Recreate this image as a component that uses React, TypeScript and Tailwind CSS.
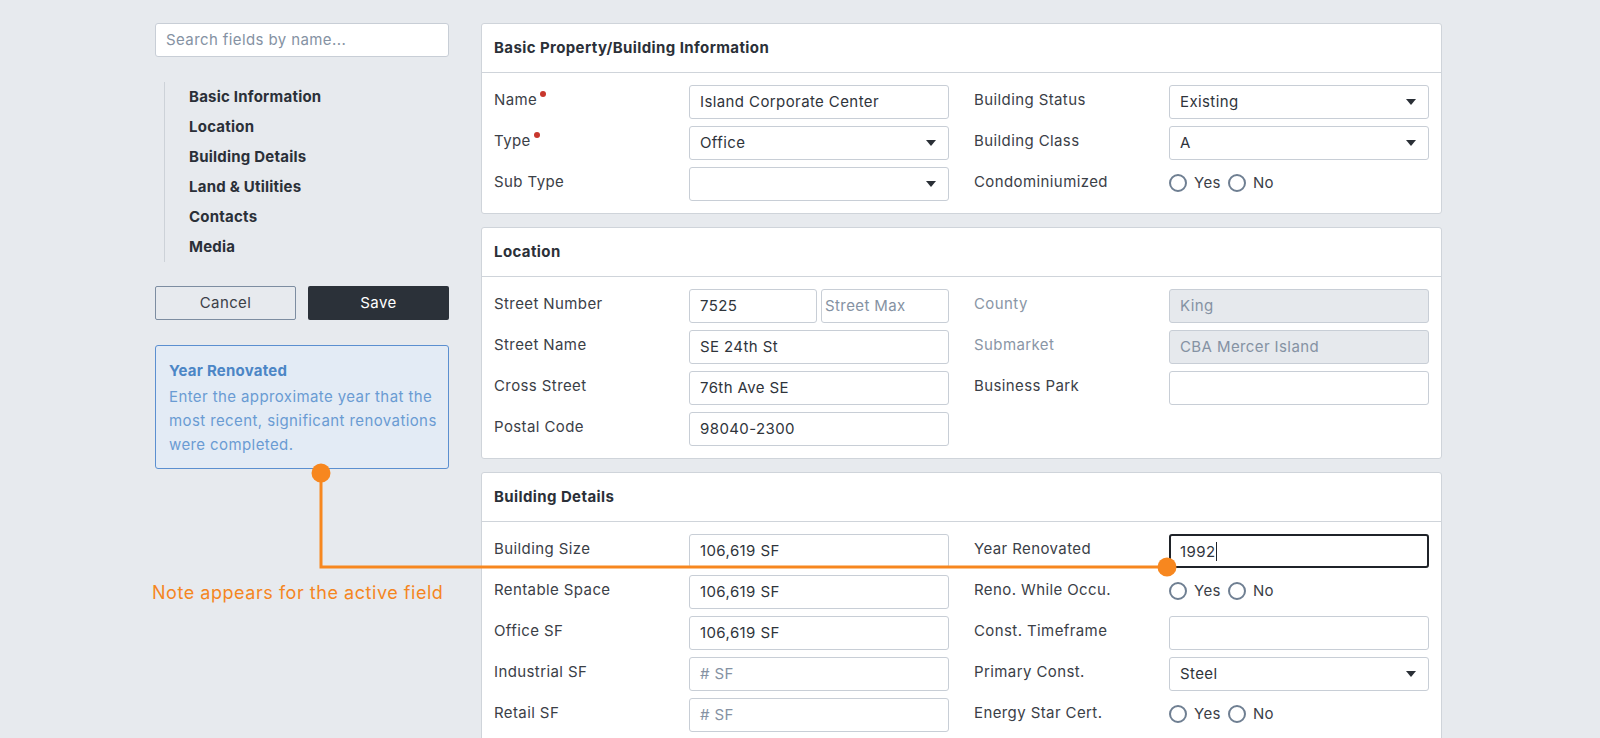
import { ReactNode } from 'react';

type Field =
  | { kind: 'input'; label: string; value?: string; placeholder?: string; required?: boolean }
  | { kind: 'select'; label: string; value?: string; required?: boolean }
  | { kind: 'radio'; label: string }
  | { kind: 'split'; label: string; value: string; placeholder: string }
  | { kind: 'disabled'; label: string; value: string }
  | { kind: 'active'; label: string; value: string }
  | { kind: 'empty' };

type Section = { title: string; rows: [Field, Field][] };

const sections: Section[] = [
  {
    title: 'Basic Property/Building Information',
    rows: [
      [{ kind: 'input', label: 'Name', value: 'Island Corporate Center', required: true }, { kind: 'select', label: 'Building Status', value: 'Existing' }],
      [{ kind: 'select', label: 'Type', value: 'Office', required: true }, { kind: 'select', label: 'Building Class', value: 'A' }],
      [{ kind: 'select', label: 'Sub Type' }, { kind: 'radio', label: 'Condominiumized' }],
    ],
  },
  {
    title: 'Location',
    rows: [
      [{ kind: 'split', label: 'Street Number', value: '7525', placeholder: 'Street Max' }, { kind: 'disabled', label: 'County', value: 'King' }],
      [{ kind: 'input', label: 'Street Name', value: 'SE 24th St' }, { kind: 'disabled', label: 'Submarket', value: 'CBA Mercer Island' }],
      [{ kind: 'input', label: 'Cross Street', value: '76th Ave SE' }, { kind: 'input', label: 'Business Park' }],
      [{ kind: 'input', label: 'Postal Code', value: '98040-2300' }, { kind: 'empty' }],
    ],
  },
  {
    title: 'Building Details',
    rows: [
      [{ kind: 'input', label: 'Building Size', value: '106,619 SF' }, { kind: 'active', label: 'Year Renovated', value: '1992' }],
      [{ kind: 'input', label: 'Rentable Space', value: '106,619 SF' }, { kind: 'radio', label: 'Reno. While Occu.' }],
      [{ kind: 'input', label: 'Office SF', value: '106,619 SF' }, { kind: 'input', label: 'Const. Timeframe' }],
      [{ kind: 'input', label: 'Industrial SF', placeholder: '# SF' }, { kind: 'select', label: 'Primary Const.', value: 'Steel' }],
      [{ kind: 'input', label: 'Retail SF', placeholder: '# SF' }, { kind: 'radio', label: 'Energy Star Cert.' }],
    ],
  },
];

const nav = ['Basic Information', 'Location', 'Building Details', 'Land & Utilities', 'Contacts', 'Media'];

function Box({ children, className = '' }: { children?: ReactNode; className?: string }) {
  return (
    <div className={`h-[34px] flex items-center px-[10px] rounded-[3px] border border-[#c8ced6] bg-white text-[15px] text-[#2f343b] ${className}`}>
      {children}
    </div>
  );
}

function Caret() {
  return (
    <svg width="10" height="6" viewBox="0 0 10 6" className="ml-auto mr-[2px] shrink-0">
      <path d="M0 0h10L5 6z" fill="#2a2f36" />
    </svg>
  );
}

function Radio({ text }: { text: string }) {
  return (
    <span className="flex items-center gap-[7px]">
      <span className="w-[18px] h-[18px] rounded-full border-2 border-[#6f7f92] bg-white" />
      <span className="text-[15px] text-[#3b4047]">{text}</span>
    </span>
  );
}

function Control({ f }: { f: Field }) {
  switch (f.kind) {
    case 'input':
      return <Box>{f.value ?? <span className="text-[#8592a3]">{f.placeholder}</span>}</Box>;
    case 'select':
      return (
        <Box>
          <span>{f.value}</span>
          <Caret />
        </Box>
      );
    case 'split':
      return (
        <div className="flex gap-[4px]">
          <Box className="w-[128px]">{f.value}</Box>
          <Box className="w-[128px] !pl-[3px] !text-[#8592a3]">{f.placeholder}</Box>
        </div>
      );
    case 'disabled':
      return <Box className="!bg-[#e6e9ed] !text-[#8592a3]">{f.value}</Box>;
    case 'active':
      return (
        <Box className="!border-2 !border-[#1f2329] !px-[9px]">
          <span className="border-r border-[#1f2329] pr-[1px] leading-[19px]">{f.value}</span>
        </Box>
      );
    case 'radio':
      return (
        <div className="h-[34px] flex items-start pt-[5px] gap-[7px]">
          <Radio text="Yes" />
          <Radio text="No" />
        </div>
      );
    default:
      return null;
  }
}

function FieldCell({ f }: { f: Field }) {
  if (f.kind === 'empty') return <div className="w-[455px]" />;
  const muted = f.kind === 'disabled';
  const required = 'required' in f && f.required;
  return (
    <div className="w-[455px] flex items-start">
      <div className={`w-[195px] pt-[5px] leading-[20px] text-[15px] ${muted ? 'text-[#8a96a6]' : 'text-[#3b4047]'}`}>
        <span className="relative">
          {f.label}
          {required && <span className="absolute -right-[9px] top-[1px] w-[6px] h-[6px] rounded-full bg-[#c8372d]" />}
        </span>
      </div>
      <div className="w-[260px]">
        <Control f={f} />
      </div>
    </div>
  );
}

function Card({ s }: { s: Section }) {
  return (
    <div className="bg-white border border-[#cfd4da] rounded-[3px]">
      <div className="h-[49px] flex items-center px-[12px] border-b border-[#cfd4da] text-[15px] font-bold text-[#2b3038]">
        {s.title}
      </div>
      <div className="pt-[12px] pb-[12px] px-[12px] flex flex-col gap-[7px]">
        {s.rows.map((r, i) => (
          <div key={i} className="flex gap-[25px]">
            <FieldCell f={r[0]} />
            <FieldCell f={r[1]} />
          </div>
        ))}
      </div>
    </div>
  );
}

export default function App() {
  return (
    <div className="relative h-[738px] overflow-hidden bg-[#e7eaee] font-['Inter',sans-serif] tracking-[0.025em]">
      <div className="flex gap-[32px] pl-[155px] pt-[23px]">
        {/* sidebar */}
        <div className="w-[294px] shrink-0">
          <div className="h-[34px] flex items-center px-[10px] bg-white border border-[#c8ced6] rounded-[3px] text-[15px] text-[#8592a3]">
            Search fields by name...
          </div>
          <div className="mt-[25px] ml-[9px] border-l border-[#cdd2d8] pl-[24px]">
            {nav.map((n) => (
              <div key={n} className="h-[30px] flex items-center text-[15px] font-bold text-[#2b3038] tracking-[0.015em]">
                {n}
              </div>
            ))}
          </div>
          <div className="mt-[24px] flex gap-[12px]">
            <button className="w-[141px] h-[34px] rounded-[2px] border border-[#7d8da1] text-[15px] text-[#3b4047]">Cancel</button>
            <button className="w-[141px] h-[34px] rounded-[2px] bg-[#2b3139] text-[15px] text-white">Save</button>
          </div>
          <div className="mt-[25px] h-[124px] rounded-[3px] border border-[#5b8fd0] bg-[#e3ebf5] pl-[13px] pr-[4px] pt-[13px]">
            <div className="text-[15px] font-bold text-[#4c86c6] leading-[24px] tracking-[0.015em]">Year Renovated</div>
            <p className="mt-[2px] text-[15px] text-[#6a9bd3] leading-[24px]">
              Enter the approximate year that the most recent, significant renovations were completed.
            </p>
          </div>
        </div>

        {/* main */}
        <div className="w-[961px] shrink-0 flex flex-col gap-[13px]">
          {sections.map((s) => (
            <Card key={s.title} s={s} />
          ))}
        </div>
      </div>

      {/* annotation overlay */}
      <svg className="absolute inset-0 pointer-events-none" width="1600" height="738">
        <polyline points="321,473 321,567 1167,567" fill="none" stroke="#f7871f" strokeWidth="3" />
        <circle cx="321" cy="473" r="9.5" fill="#f7871f" />
        <circle cx="1167" cy="567" r="9.5" fill="#f7871f" />
      </svg>
      <div className="absolute left-[152px] top-[582px] text-[18px] leading-[22px] text-[#f5861f] tracking-[0.03em]">
        Note appears for the active field
      </div>
    </div>
  );
}
